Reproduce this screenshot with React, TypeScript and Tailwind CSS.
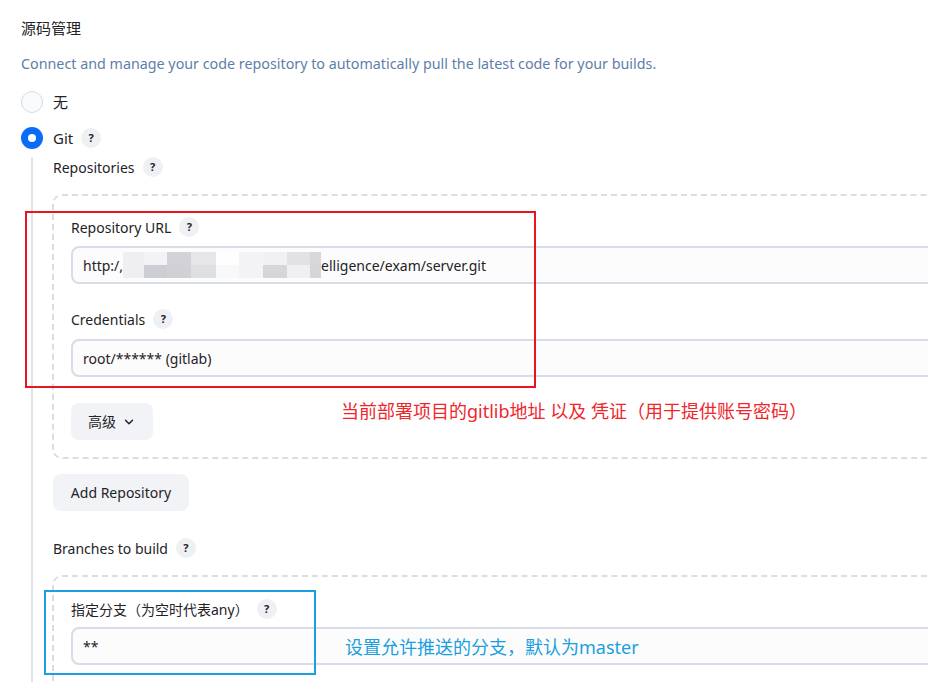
import { ChevronDown } from "lucide-react";

const FONT = { fontFamily: '"Noto Sans", "Noto Sans CJK SC", sans-serif' };

function Help() {
  return (
    <span className="ml-2 inline-flex h-5 w-5 shrink-0 items-center justify-center rounded-full bg-[#eef0f4] text-[11px] font-bold text-[#1f2328]">
      ?
    </span>
  );
}

function Radio({ checked }: { checked?: boolean }) {
  if (checked) {
    return (
      <span className="flex h-[22px] w-[22px] items-center justify-center rounded-full bg-[#0b6cf6]">
        <span className="h-2 w-2 rounded-full bg-white" />
      </span>
    );
  }
  return <span className="h-[22px] w-[22px] rounded-full border-[1.5px] border-[#d5dae3] bg-[#fafbfc]" />;
}

const mosaic = [
  { w: 21, top: "#efeff1", bottom: "#efeff1" },
  { w: 23, top: "#f3f3f5", bottom: "#cdced3" },
  { w: 24, top: "#d2d2d7", bottom: "#d0d0d5" },
  { w: 25, top: "#e6e6e9", bottom: "#dedfe2" },
  { w: 23, top: "#fefefe", bottom: "#f7f8fa" },
  { w: 24, top: "#f3f3f5", bottom: "#f3f3f5" },
  { w: 24, top: "#f1f1f3", bottom: "#d6d6da" },
  { w: 23, top: "#e2e2e5", bottom: "#f0f0f2" },
  { w: 11, top: "#d8d8dc", bottom: "#d6d6da" },
];

function Input({ children }: { children: React.ReactNode }) {
  return (
    <div className="flex h-[38px] w-[880px] items-center rounded-lg border-2 border-[#d9dce7] bg-[#fcfcfc] pl-[10px] text-[14px] text-[#1f2328]">
      {children}
    </div>
  );
}

export default function App() {
  return (
    <div className="relative h-[682px] w-[928px] overflow-hidden bg-white text-[#1f2328]" style={FONT}>
      <div className="flex flex-col pl-[21px] pt-[18px]">
        <h2 className="text-[15px] leading-5">源码管理</h2>
        <p className="mt-4 whitespace-nowrap text-[14.3px] leading-5 text-[#5f7ea8]">
          Connect and manage your code repository to automatically pull the latest code for your builds.
        </p>

        <div className="mt-[17px] flex items-center gap-[10px]">
          <Radio />
          <span className="text-[15px]">无</span>
        </div>
        <div className="mt-[13px] flex items-center gap-[10px]">
          <Radio checked />
          <span className="flex items-center text-[15px]">
            Git
            <Help />
          </span>
        </div>

        <div className="ml-[10px] mt-2 flex flex-col border-l-2 border-[#dfe3ea] pb-10 pl-5">
          <div className="flex h-5 items-center text-[14px]">
            Repositories
            <Help />
          </div>

          <div className="mt-[17px] -ml-[1px] flex w-[900px] flex-col rounded-[10px] border-2 border-dashed border-[#d8dee8] pb-[17px] pl-[17px] pt-[21px]">
            <div className="flex h-5 items-center text-[14px]">
              Repository URL
              <Help />
            </div>
            <div className="mt-[9px]">
              <Input>
                <span>http:/,</span>
                <span className="flex h-[26px] flex-col">
                  <span className="flex h-[13px]">
                    {mosaic.map((m, i) => (
                      <span key={i} className="h-full" style={{ width: m.w, background: m.top }} />
                    ))}
                  </span>
                  <span className="flex h-[13px]">
                    {mosaic.map((m, i) => (
                      <span key={i} className="h-full" style={{ width: m.w, background: m.bottom }} />
                    ))}
                  </span>
                </span>
                <span>elligence/exam/server.git</span>
              </Input>
            </div>

            <div className="mt-[25px] flex h-5 items-center text-[14px]">
              Credentials
              <Help />
            </div>
            <div className="mt-[10px]">
              <Input>root/****** (gitlab)</Input>
            </div>

            <button className="mt-[26px] flex h-[37px] w-[82px] items-center justify-center gap-[6px] rounded-lg bg-[#f1f3f6] text-[14px]">
              高级
              <ChevronDown size={14} strokeWidth={2.5} />
            </button>
          </div>

          <button className="mt-[15px] flex h-[37px] w-[136px] items-center justify-center rounded-lg bg-[#f1f3f6] text-[14px]">
            Add Repository
          </button>

          <div className="mt-[27px] flex h-5 items-center text-[14px]">
            Branches to build
            <Help />
          </div>

          <div className="mt-[17px] -ml-[1px] flex w-[900px] flex-col rounded-[10px] border-2 border-dashed border-[#d8dee8] pb-6 pl-[17px] pt-[22px]">
            <div className="flex h-5 items-center text-[14px]">
              指定分支（为空时代表any）
              <Help />
            </div>
            <div className="mt-[8px]">
              <Input>**</Input>
            </div>
          </div>
        </div>
      </div>

      {/* annotations */}
      <div className="absolute left-[25px] top-[211px] h-[177px] w-[511px] border-2 border-[#e8141f]" />
      <div className="absolute left-[341px] top-[400px] whitespace-nowrap text-[18px] leading-[22px] text-[#f0262b]">
        当前部署项目的gitlib地址 以及 凭证（用于提供账号密码）
      </div>
      <div className="absolute left-[44px] top-[590px] h-[85px] w-[272px] border-2 border-[#1a9fe0]" />
      <div className="absolute left-[345px] top-[636px] whitespace-nowrap text-[18px] leading-[22px] text-[#1a9fe0]">
        设置允许推送的分支，默认为master
      </div>
    </div>
  );
}
